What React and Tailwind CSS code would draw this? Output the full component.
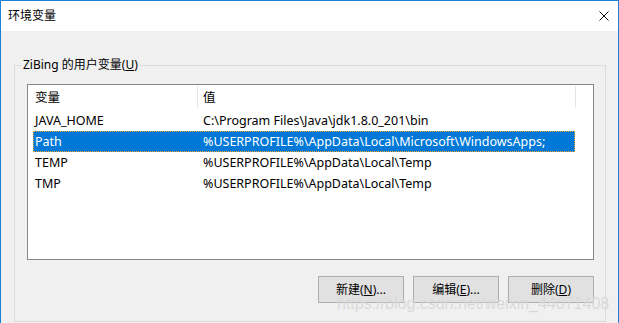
const ROWS = [
  { name: "JAVA_HOME", value: "C:\\Program Files\\Java\\jdk1.8.0_201\\bin" },
  { name: "Path", value: "%USERPROFILE%\\AppData\\Local\\Microsoft\\WindowsApps;", selected: true },
  { name: "TEMP", value: "%USERPROFILE%\\AppData\\Local\\Temp" },
  { name: "TMP", value: "%USERPROFILE%\\AppData\\Local\\Temp" },
];

export default function App() {
  return (
    <div
      className="relative w-[619px] h-[323px] overflow-hidden bg-[#f0f0f0] border-x border-t border-[#1e7fd6] text-[12px] leading-[16px] text-black"
      style={{ fontFamily: '"Noto Sans", "Noto Sans CJK SC", sans-serif' }}
    >
      {/* Title bar */}
      <div className="h-[30px] bg-white flex items-center justify-between pl-[7px] pr-[9px]">
        <span>环境变量</span>
        <svg width="10" height="10" viewBox="0 0 10 10" fill="none" stroke="#111" strokeWidth="1">
          <path d="M0.5 0.5 L9.5 9.5 M9.5 0.5 L0.5 9.5" />
        </svg>
      </div>

      <div className="pl-[13px] pt-[34px]">
        {/* Group box */}
        <div className="relative w-[592px] h-[257px] border border-[#dcdcdc] pl-[12px] pt-[18px]">
          <span className="absolute -top-[9px] left-[6px] px-[2px] bg-[#f0f0f0]">
            ZiBing 的用户变量(<span className="underline">U</span>)
          </span>

          {/* List view */}
          <div className="w-[567px] h-[176px] border border-[#828790] bg-white text-[12.5px]">
            <div className="h-[25px] flex">
              <div className="w-[169px] pl-[7px] flex items-center">变量</div>
              <div className="w-px h-[22px] mt-px bg-[#e5e5e5]" />
              <div className="w-[377px] pl-[5px] flex items-center">值</div>
              <div className="w-px h-[22px] mt-px bg-[#e5e5e5]" />
            </div>
            {ROWS.map((r) => (
              <div
                key={r.name}
                className={
                  r.selected
                    ? "ml-[5px] w-[542px] h-[21px] flex items-center border border-dotted border-[#f5a623] bg-[#0078d7] text-white"
                    : "ml-[5px] w-[542px] h-[21px] flex items-center border border-transparent"
                }
              >
                <div className="w-[168px] pl-[1px]">{r.name}</div>
                <div className="pl-[1px] whitespace-nowrap">{r.value}</div>
              </div>
            ))}
          </div>

          {/* Buttons */}
          <div className="w-[567px] mt-[16px] flex justify-end gap-[9px]">
            <button className="w-[86px] h-[27px] border border-[#adadad] bg-[#e1e1e1] flex items-center justify-center">
              新建(<span className="underline">N</span>)...
            </button>
            <button className="w-[86px] h-[27px] border border-[#adadad] bg-[#e1e1e1] flex items-center justify-center">
              编辑(<span className="underline">E</span>)...
            </button>
            <button className="w-[86px] h-[27px] border border-[#adadad] bg-[#e1e1e1] flex items-center justify-center">
              删除(<span className="underline">D</span>)
            </button>
          </div>
        </div>
      </div>

      {/* Watermark */}
      <span
        className="absolute left-[336px] top-[294px] text-[16px] leading-[18px] text-[#d2d2d2] opacity-80 [text-shadow:0_0_1px_#ffffff] whitespace-nowrap pointer-events-none"
        style={{ fontFamily: '"Liberation Sans", sans-serif' }}
      >
        https://blog.csdn.net/weixin_44071408
      </span>
    </div>
  );
}
